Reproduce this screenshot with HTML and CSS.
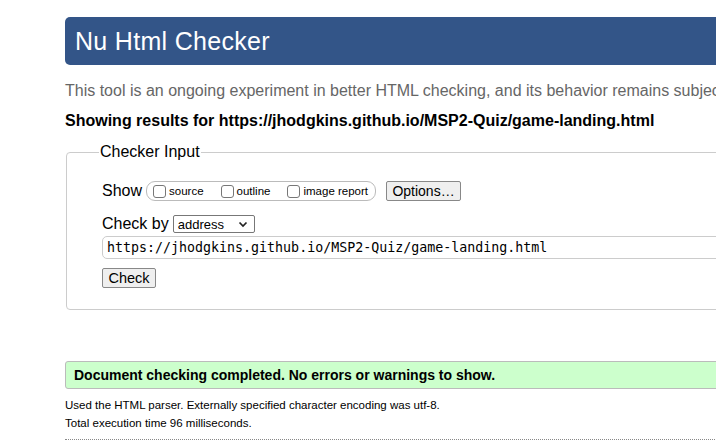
FILE: index.html
```html
<!DOCTYPE html>
<html>
<head>
<meta charset="utf-8">
<title>Nu Html Checker</title>
<link rel="stylesheet" href="styles.css">
</head>
<body>
<div class="page">
  <h1 class="title">Nu Html Checker</h1>
  <p class="intro">This tool is an ongoing experiment in better HTML checking, and its behavior remains subject to change</p>
  <p class="showing">Showing results for https://jhodgkins.github.io/MSP2-Quiz/game-landing.html</p>
  <fieldset class="input-box">
    <legend class="legend">Checker Input</legend>
    <div class="row">
      <span class="lbl">Show</span>
      <span class="group">
        <label class="opt"><span class="cb"></span>source</label>
        <label class="opt"><span class="cb"></span>outline</label>
        <label class="opt"><span class="cb"></span>image report</label>
      </span>
      <span class="btn btn-opts">Options…</span>
    </div>
    <div class="row row-by">
      <span class="lbl">Check by</span>
      <span class="select">address<svg class="chev" width="10" height="7" viewBox="0 0 10 7"><path d="M1.5 1.5 L5 5 L8.5 1.5" fill="none" stroke="#222" stroke-width="1.7"/></svg></span>
    </div>
    <div class="url">https://jhodgkins.github.io/MSP2-Quiz/game-landing.html</div>
    <div class="row-check"><span class="btn btn-check">Check</span></div>
  </fieldset>
  <div class="success">Document checking completed. No errors or warnings to show.</div>
  <p class="meta meta-first">Used the HTML parser. Externally specified character encoding was utf-8.</p>
  <p class="meta">Total execution time 96 milliseconds.</p>
  <div class="dots"></div>
</div>
</body>
</html>
```
FILE: styles.css
```css
html, body { margin: 0; padding: 0; background: #fff; overflow: hidden; }
body { font-family: "Liberation Sans", Arial, sans-serif; color: #000; }
.page { margin-left: 65px; width: 1000px; padding-top: 17px; }
.title {
  margin: 0; height: 48px; box-sizing: border-box; padding: 0 0 0 10px;
  background: #335588; color: #fff; border-radius: 5px;
  font-weight: normal; font-size: 25px; letter-spacing: 0.3px; line-height: 48px;
}
.intro { margin: 17px 0 0; color: #666; font-size: 16px; line-height: 18px; white-space: nowrap; }
.showing { margin: 12px 0 0; font-weight: bold; font-size: 16px; line-height: 18px; }
.input-box {
  margin: 13px 0 0 1px; padding: 20px 0 21px 35px; border: 1px solid #ccc; border-radius: 4px;
}
.legend { padding: 0 1px; margin-left: -3px; font-size: 16px; line-height: 18px; }
.row { display: flex; align-items: center; height: 20px; }
.lbl { font-size: 16px; margin-right: 4px; }
.group {
  display: flex; align-items: center; height: 20px; box-sizing: border-box;
  border: 1px solid #bbb; border-radius: 9px; padding: 0 7px 0 6px;
}
.opt { display: flex; align-items: center; font-size: 11.5px; margin-right: 17px; }
.opt:last-child { margin-right: 0; }
.cb { width: 13px; height: 13px; border: 1px solid #777; border-radius: 3px; margin-right: 3px; box-sizing: border-box; background: #fff; }
.btn {
  display: inline-flex; align-items: center; justify-content: center; box-sizing: border-box;
  border: 1px solid #888; border-radius: 2px; background: #efefef; font-size: 14px; height: 20px;
}
.btn-opts { margin-left: 10px; width: 75px; }
.row-by { margin-top: 14px; height: 18px; }
.select {
  display: inline-flex; align-items: center; justify-content: space-between; box-sizing: border-box;
  width: 82px; height: 18px; border: 1px solid #777; border-radius: 2px; font-size: 13px; padding: 0 6px 0 4px;
}
.url {
  margin-top: 3px; height: 23px; box-sizing: border-box; border: 1px solid #ccc; border-radius: 5px;
  font-family: "DejaVu Sans Mono", monospace; font-size: 13.3px; line-height: 21px; padding-left: 4px;
}
.row-check { margin-top: 9px; height: 20px; }
.btn-check { width: 54px; font-size: 14.5px; }
.success {
  margin-top: 51px; height: 28px; box-sizing: border-box; border: 1px solid #bbb; border-radius: 3px;
  background: #ccffcc; font-weight: bold; font-size: 14px; line-height: 26px; padding-left: 8px;
}
.meta { margin: 4px 0 0; font-size: 11.5px; line-height: 14px; }
.meta-first { margin-top: 9px; }
.dots { margin-top: 9px; border-top: 1px dotted #888; }
```
